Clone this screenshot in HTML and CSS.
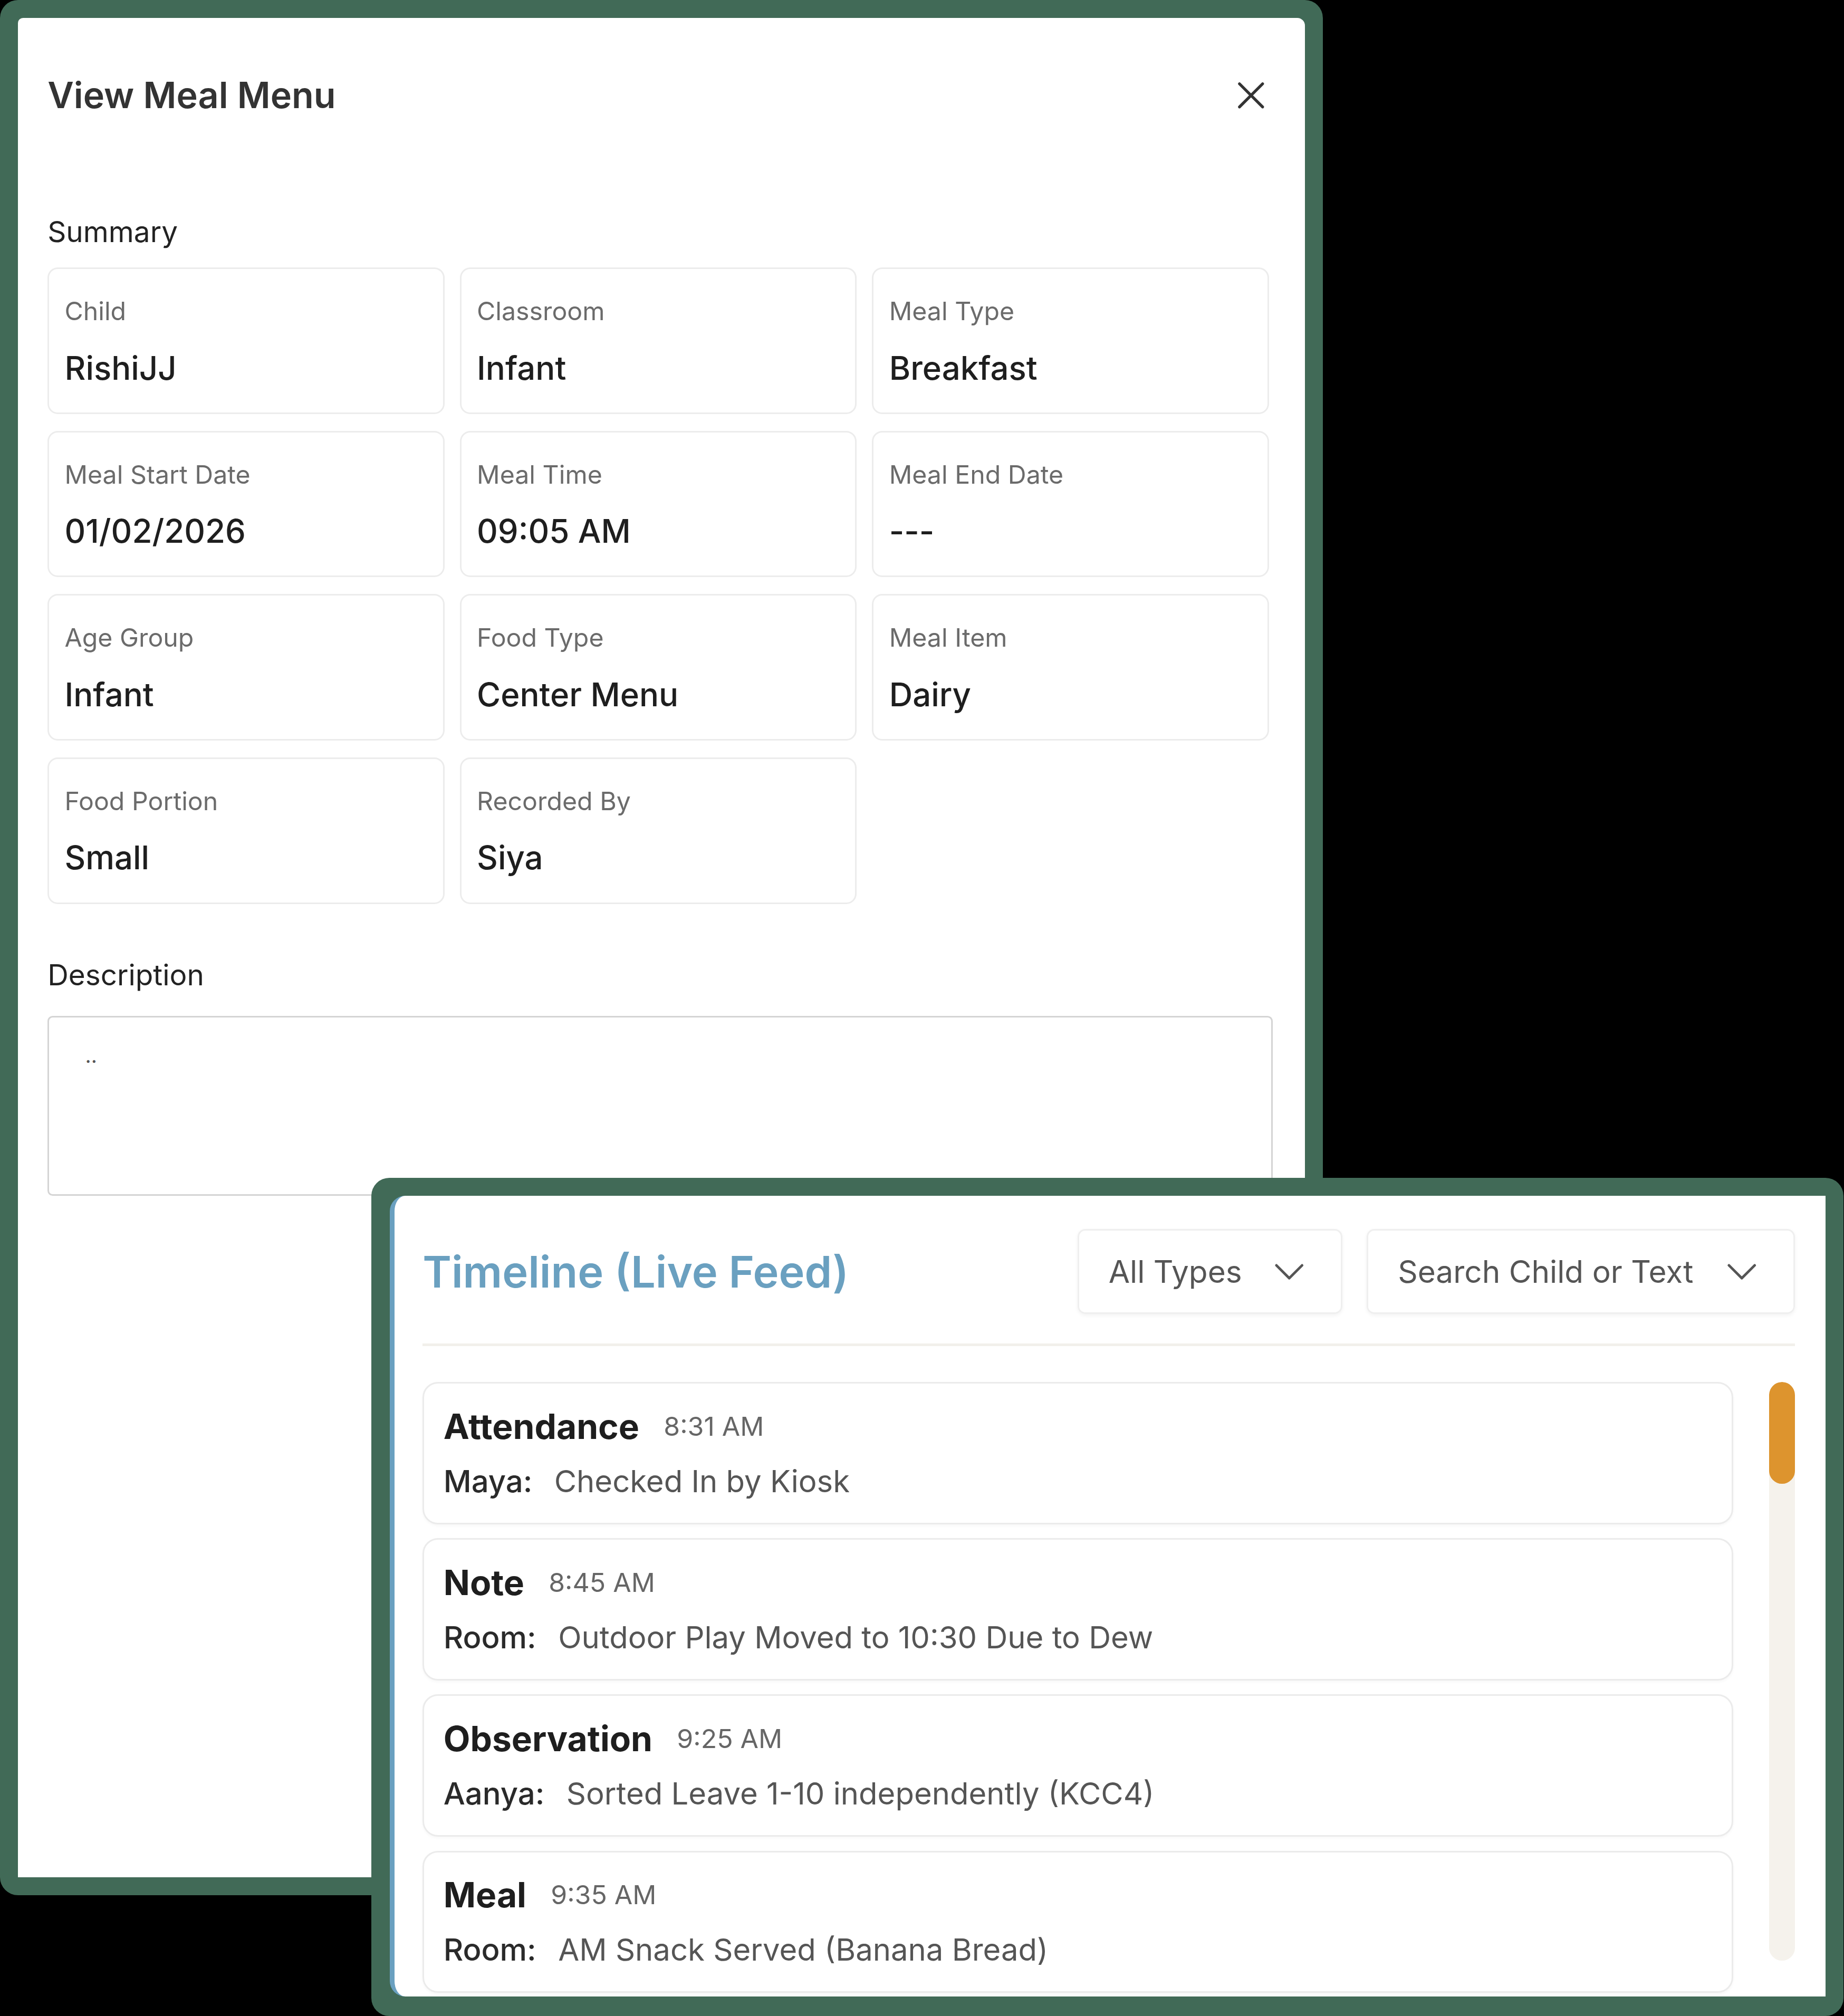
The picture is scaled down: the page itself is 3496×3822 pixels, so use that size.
FILE: index.html
```html
<!DOCTYPE html>
<html>
<head>
  <title>View Meal Menu</title>
  <link rel="stylesheet" href="styles.css">
</head>
<body>
  <div class="stage">
    <section class="modal">
      <div class="modal-body">
        <header class="modal-head">
          <h1>View Meal Menu</h1>
          <button class="close-btn" aria-label="Close">
            <svg width="22" height="22" viewBox="0 0 22 22"><path d="M2 2 L20 20 M20 2 L2 20" stroke="#333" stroke-width="2.2" stroke-linecap="round" fill="none"/></svg>
          </button>
        </header>

        <h2 class="section-title">Summary</h2>
        <div class="summary-grid">
          <div class="info-card"><span class="label">Child</span><span class="value">RishiJJ</span></div>
          <div class="info-card"><span class="label">Classroom</span><span class="value">Infant</span></div>
          <div class="info-card"><span class="label">Meal Type</span><span class="value">Breakfast</span></div>
          <div class="info-card"><span class="label">Meal Start Date</span><span class="value">01/02/2026</span></div>
          <div class="info-card"><span class="label">Meal Time</span><span class="value">09:05 AM</span></div>
          <div class="info-card"><span class="label">Meal End Date</span><span class="value">---</span></div>
          <div class="info-card"><span class="label">Age Group</span><span class="value">Infant</span></div>
          <div class="info-card"><span class="label">Food Type</span><span class="value">Center Menu</span></div>
          <div class="info-card"><span class="label">Meal Item</span><span class="value">Dairy</span></div>
          <div class="info-card"><span class="label">Food Portion</span><span class="value">Small</span></div>
          <div class="info-card"><span class="label">Recorded By</span><span class="value">Siya</span></div>
        </div>

        <h2 class="section-title desc-title">Description</h2>
        <div class="desc-box">..</div>
      </div>
    </section>

    <!-- overlapping window -->
    <section class="timeline">
      <div class="timeline-body">
        <div class="timeline-head">
          <h2>Timeline (Live Feed)</h2>
          <div class="filters">
            <div class="select types">
              <span>All Types</span>
              <svg width="24" height="14" viewBox="0 0 24 14"><path d="M2 2 L12 12 L22 2" stroke="#555" stroke-width="2" fill="none" stroke-linecap="round" stroke-linejoin="round"/></svg>
            </div>
            <div class="select search">
              <span>Search Child or Text</span>
              <svg width="24" height="14" viewBox="0 0 24 14"><path d="M2 2 L12 12 L22 2" stroke="#555" stroke-width="2" fill="none" stroke-linecap="round" stroke-linejoin="round"/></svg>
            </div>
          </div>
        </div>
        <div class="divider"></div>

        <div class="feed">
          <div class="feed-list">
            <div class="feed-item">
              <div class="item-top"><span class="item-type">Attendance</span><span class="item-time">8:31 AM</span></div>
              <div class="item-line"><span class="who">Maya:</span><span class="what">Checked In by Kiosk</span></div>
            </div>
            <div class="feed-item">
              <div class="item-top"><span class="item-type">Note</span><span class="item-time">8:45 AM</span></div>
              <div class="item-line"><span class="who">Room:</span><span class="what">Outdoor Play Moved to 10:30 Due to Dew</span></div>
            </div>
            <div class="feed-item">
              <div class="item-top"><span class="item-type">Observation</span><span class="item-time">9:25 AM</span></div>
              <div class="item-line"><span class="who">Aanya:</span><span class="what">Sorted Leave 1-10 independently (KCC4)</span></div>
            </div>
            <div class="feed-item">
              <div class="item-top"><span class="item-type">Meal</span><span class="item-time">9:35 AM</span></div>
              <div class="item-line"><span class="who">Room:</span><span class="what">AM Snack Served (Banana Bread)</span></div>
            </div>
          </div>
          <div class="scrollbar"><div class="thumb"></div></div>
        </div>
      </div>
    </section>
  </div>
</body>
</html>
```

FILE: styles.css
```css
html, body {
  margin: 0;
  padding: 0;
  background-color: #000;
}

body {
  font-family: Inter, "Noto Sans", sans-serif;
  color: #222;
}

/* whole drawing is laid out at 1434x1568 and scaled up */
.stage {
  zoom: 2.4375;
  position: relative;
  width: 1434px;
  height: 1568px;
  overflow: hidden;
}

/* ---------- meal menu modal ---------- */
.modal {
  width: 1029px;
  height: 1474px;
  box-sizing: border-box;
  padding: 14px;
  background-color: #416a57;
  border-radius: 14px;
}

.modal-body {
  height: 100%;
  box-sizing: border-box;
  background-color: #fff;
  border-radius: 4px 6px 0 0;
  padding: 43px 25px 0 23px;
}

.modal-head {
  display: flex;
  align-items: center;
  justify-content: space-between;
}

.modal-head h1 {
  margin: 0;
  font-size: 28px;
  line-height: 34px;
  font-weight: 600;
  color: #333;
}

.close-btn {
  width: 28px;
  height: 28px;
  padding: 0;
  margin-right: 3px;
  border: none;
  background: none;
  display: flex;
  align-items: center;
  justify-content: center;
}

.section-title {
  margin: 75px 0 14px;
  font-size: 22.5px;
  line-height: 28px;
  font-weight: 400;
  color: #222;
}

.summary-grid {
  display: grid;
  grid-template-columns: repeat(3, 1fr);
  column-gap: 12px;
  row-gap: 13px;
  margin-right: 3px;
}

.info-card {
  height: 114px;
  box-sizing: border-box;
  border: 1.5px solid #ececec;
  border-radius: 8px;
  padding: 21px 12px 0;
  display: flex;
  flex-direction: column;
  gap: 16px;
}

.info-card .label {
  font-size: 19.8px;
  line-height: 24px;
  color: #6b6b6b;
}

.info-card .value {
  font-size: 25.3px;
  line-height: 32px;
  font-weight: 500;
  color: #1e1e1e;
}

.desc-title {
  margin: 41px 0 18px;
}

.desc-box {
  height: 140px;
  box-sizing: border-box;
  border: 1.5px solid #d4d4d4;
  border-radius: 4px;
  padding: 20px 28px;
  font-size: 16px;
  color: #555;
}

/* ---------- timeline window ---------- */
.timeline {
  position: absolute;
  left: 289px;
  top: 916px;
  width: 1145px;
  height: 652px;
  box-sizing: border-box;
  padding: 14px 14px 15px;
  background-color: #416a57;
  border-radius: 14px;
}

.timeline-body {
  height: 100%;
  box-sizing: border-box;
  background-color: #fff;
  border-left: 4px solid #6aa0c0;
  border-radius: 12px 0 0 12px;
  padding: 26px 24px 0 22px;
  overflow: hidden;
}

.timeline-head {
  display: flex;
  align-items: center;
  justify-content: space-between;
}

.timeline-head h2 {
  margin: 0;
  font-size: 34px;
  font-weight: 600;
  color: #6aa0c0;
}

.filters {
  display: flex;
  gap: 19px;
}

.select {
  height: 66px;
  box-sizing: border-box;
  display: flex;
  align-items: center;
  justify-content: space-between;
  padding: 0 28px 0 23px;
  border: 1.5px solid #efefef;
  border-radius: 6px;
  box-shadow: 0 1px 3px rgba(0,0,0,0.05);
  font-size: 24px;
  color: #555;
}

.select.types {
  width: 206px;
}

.select.search {
  width: 333px;
}

.divider {
  height: 2px;
  background-color: #f2f0eb;
  margin: 23px 0 28px;
}

.feed {
  display: flex;
  gap: 28px;
}

.feed-list {
  flex: 1;
  display: flex;
  flex-direction: column;
  gap: 11px;
}

.feed-item {
  border: 1.5px solid #ebebeb;
  border-radius: 12px;
  padding: 16px 16px 17px 15px;
  box-shadow: 0 1px 2px rgba(0,0,0,0.03);
}

.item-top {
  display: flex;
  align-items: center;
  gap: 19px;
  height: 34px;
}

.item-type {
  font-size: 27px;
  font-weight: 700;
  color: #1e1e1e;
}

.item-time {
  font-size: 20.5px;
  color: #666;
}

.item-line {
  margin-top: 11px;
  height: 30px;
  line-height: 30px;
  font-size: 23.8px;
  display: flex;
  gap: 17px;
}

.item-line .who {
  color: #2a2a2a;
  font-weight: 500;
}

.item-line .what {
  color: #555;
}

.scrollbar {
  width: 20px;
  height: 450px;
  border-radius: 10px;
  background-color: #f5f2ec;
  overflow: hidden;
}

.scrollbar .thumb {
  height: 79px;
  border-radius: 10px;
  background-color: #dd942e;
}
```
